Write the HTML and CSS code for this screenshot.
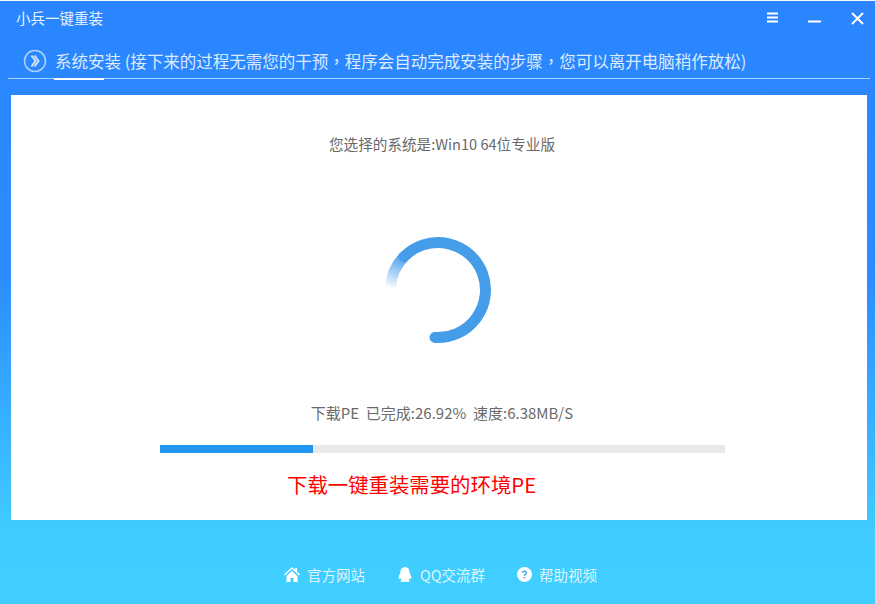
FILE: index.html
```html
<!DOCTYPE html>
<html lang="zh-CN">
<head>
  <meta charset="UTF-8" />
  <title>小兵一键重装</title>
  <link rel="stylesheet" href="styles.css">
</head>
<body>
  <div class="window">
    <header class="titlebar">
      <span class="app-name">小兵一键重装</span>
      <div class="win-btns">
        <svg class="btn-menu" width="12" height="12" viewBox="0 0 12 12"><path d="M0 1.500h11M0 5.500h11M0 9.500h11" stroke="#fff" stroke-width="2"/></svg>
        <svg class="btn-min" width="14" height="12" viewBox="0 0 14 12"><path d="M0 9.500h13" stroke="#fff" stroke-width="2"/></svg>
        <svg class="btn-close" width="13" height="13" viewBox="0 0 13 13"><path d="M1 1l11 11M12 1L1 12" stroke="#fff" stroke-width="2"/></svg>
      </div>
    </header>

    <div class="step">
      <svg class="step-icon" width="24" height="24" viewBox="0 0 24 24">
        <circle cx="12" cy="12" r="10.500" fill="none" stroke="#a5d0fb" stroke-width="1.600"/>
        <path d="M8.500 6.500l4 5.500-4 5.500M11.500 6.500l4 5.500-4 5.500" fill="none" stroke="#cfe5fd" stroke-width="2"/>
      </svg>
      <span class="step-text">系统安装 (接下来的过程无需您的干预<span class="comma" lang="zh-TW">，</span>程序会自动完成安装的步骤<span class="comma" lang="zh-TW">，</span>您可以离开电脑稍作放松)</span>
    </div>

    <main class="card">
      <p class="system-name">您选择的系统是:Win10 64位专业版</p>

      <svg class="spinner" width="110" height="110" viewBox="0 0 110 110">
        <defs>
          <linearGradient id="tail" gradientUnits="userSpaceOnUse" x1="7" y1="54" x2="21" y2="21">
            <stop offset="0" stop-color="#459dea" stop-opacity="0"/>
            <stop offset="1" stop-color="#459dea"/>
          </linearGradient>
        </defs>
        <path d="M7.500 52A47.500 47.500 0 0 1 21.400 21.400" fill="none" stroke="url(#tail)" stroke-width="11"/>
        <path d="M21.400 21.400A47.500 47.500 0 1 1 52 102.400" fill="none" stroke="#459dea" stroke-width="11" stroke-linecap="round"/>
      </svg>

      <p class="status">下载PE&nbsp;&nbsp;已完成:26.92%&nbsp;&nbsp;速度:6.38MB/S</p>

      <div class="progress"><div class="progress-fill" style="width: 27.1%"></div></div>

      <p class="note">下载一键重装需要的环境PE</p>
    </main>

    <footer class="links">
      <a class="link">
        <svg width="16" height="15" viewBox="0 0 16 15"><path d="M8 0L0 7.500l1 1L8 2l7 6.500 1-1L13 4.700V1h-2v1.800zM2.500 9.300L8 4l5.500 5.300V15H9.500v-4h-3v4h-4z" fill="#fff"/></svg>
        官方网站
      </a>
      <a class="link">
        <svg width="16" height="16" viewBox="0 0 16 16"><path d="M8 0c3 0 4.600 2.200 4.600 5 0 .6 0 1 .2 1.500.8 1.200 1.900 3.300 1.400 5-.3.800-1 .3-1.500-.5-.2 1-.6 1.700-1.300 2.300.8.300 1.300.8 1 1.400-.4.500-2.400.500-3.400.1H7c-1 .4-3 .4-3.400-.1-.3-.6.2-1.100 1-1.400-.7-.6-1.100-1.300-1.300-2.300-.5.800-1.200 1.300-1.500.5-.5-1.700.6-3.800 1.400-5 .2-.5.200-.9.200-1.500C3.400 2.200 5 0 8 0z" fill="#fff"/></svg>
        QQ交流群
      </a>
      <a class="link">
        <svg width="15" height="15" viewBox="0 0 15 15"><circle cx="7.500" cy="7.500" r="7.500" fill="#fff"/><path d="M5 5.800c0-3 5-3 5 0 0 1.700-2 1.700-2 3.200H6.800c0-2 1.700-2.100 1.700-3.200 0-1.200-2-1-2.100.2zM6.700 10h1.500v1.500H6.700z" fill="#3ba8e8"/></svg>
        帮助视频
      </a>
    </footer>
  </div>
</body>
</html>
```

FILE: styles.css
```css
* {
  box-sizing: border-box;
}
body {
  margin: 0;
  font-family: "Noto Sans CJK SC", "Noto Sans", sans-serif;
}
p {
  margin: 0;
}
.window {
  width: 875px;
  height: 604px;
  display: flex;
  flex-direction: column;
  overflow: hidden;
  border-top: 1px solid #f4f8fe;
  background: linear-gradient(#2a85ff 0%, #2b8cff 45%, #40ccff 88%, #40ceff 100%);
}

/* title bar */
.titlebar {
  height: 34px;
  padding: 0 11px 0 16px;
  display: flex;
  justify-content: space-between;
  align-items: center;
  color: #e8f2ff;
}
.app-name {
  font-size: 14.500px;
  margin-bottom: 2px;
}
.win-btns {
  display: flex;
  align-items: center;
  gap: 29px;
}

/* step line */
.step {
  height: 44px;
  margin: 0 5px 0 8px;
  padding: 8px 0 0 15px;
  display: flex;
  align-items: center;
  gap: 8px;
  border-bottom: 1px solid #a5d3fb;
  position: relative;
  color: #dcebff;
}
.step::after {
  content: "";
  position: absolute;
  left: 46px;
  bottom: -2px;
  width: 50px;
  height: 2px;
  background: #fff;
}
.step-text {
  font-size: 16.500px;
  white-space: nowrap;
}
.comma {
  font-family: "Noto Sans CJK TC", sans-serif;
}

/* white card */
.card {
  height: 425px;
  margin: 16px 8px 0 11px;
  background: #fff;
  display: flex;
  flex-direction: column;
  align-items: center;
  color: #6a6a6a;
  font-size: 14px;
}
.system-name {
  margin-top: 38px;
  line-height: 22px;
  margin-left: 6px;
  font-size: 14.600px;
}
.spinner {
  margin-top: 80px;
  margin-left: -2px;
}
.status {
  margin-top: 57px;
  line-height: 22px;
  margin-left: 6px;
  font-size: 15px;
}
.progress {
  width: 565px;
  height: 8px;
  margin-top: 21px;
  margin-left: 7px;
  background: #e9e9e9;
}
.progress-fill {
  height: 100%;
  background: #2196f0;
}
.note {
  margin-top: 16px;
  line-height: 30px;
  font-size: 20.400px;
  color: #f00;
  align-self: flex-start;
  margin-left: 276px;
}

/* footer links */
.links {
  flex: 1;
  display: flex;
  justify-content: center;
  align-items: center;
  gap: 32px;
  padding: 25px 0 0 6px;
  font-size: 14.500px;
  color: #dff5ff;
}
.link {
  display: flex;
  align-items: center;
  gap: 7px;
}
```
